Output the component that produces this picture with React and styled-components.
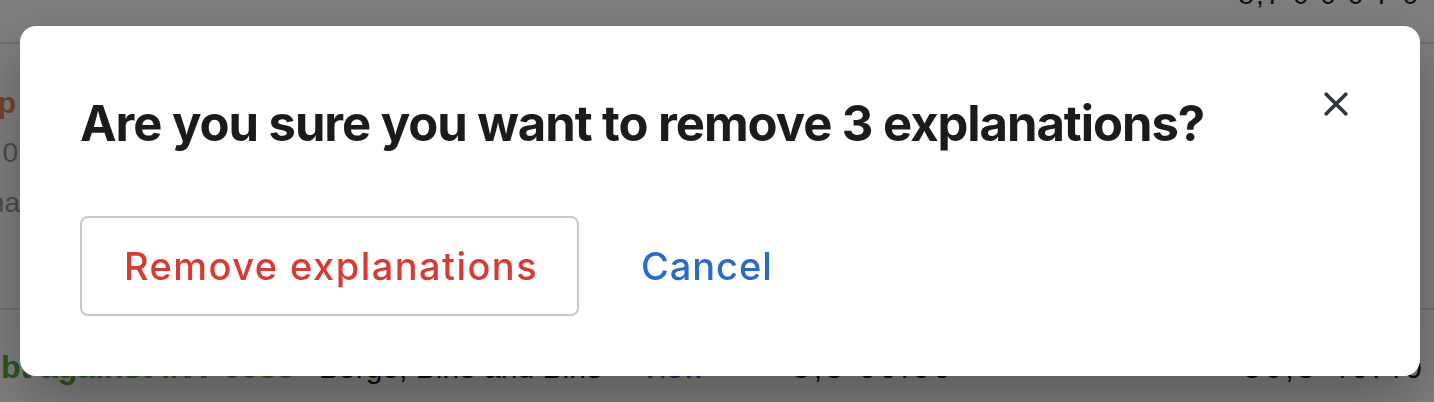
import React from 'react';
import styled, { createGlobalStyle } from 'styled-components';

const GlobalStyle = createGlobalStyle`
  html, body {
    margin: 0;
    padding: 0;
    overflow: hidden;
  }
  body {
    font-family: 'Liberation Sans', Arial, sans-serif;
    background: #ffffff;
  }
`;

// page sitting behind the dialog
const Page = styled.div`
  width: 1434px;
  height: 402px;
  display: flex;
  flex-direction: column;
  overflow: hidden;
  background: #ffffff;
`;

const Row = styled.div`
  display: flex;
  align-items: flex-start;
  height: ${(p) => p.height}px;
  border-bottom: ${(p) => (p.divider ? '2px solid #e3e3e3' : 'none')};
  box-sizing: border-box;
`;

const TopAmount = styled.span`
  margin: -19px 14px 0 auto;
  font-size: 28px;
  line-height: 28px;
  color: #222;
  letter-spacing: 2px;
`;

const LeftCol = styled.div`
  width: 16px;
  display: flex;
  flex-direction: column;
  align-items: flex-end;
  gap: 20px;
  padding-top: 44px;
`;

const Ref = styled.span`
  font-size: 30px;
  line-height: 30px;
  font-weight: 700;
  color: #e0895a;
  white-space: nowrap;
`;

const Meta = styled.span`
  font-size: 28px;
  line-height: 30px;
  color: #9a9a9a;
  white-space: nowrap;
  margin-right: ${(p) => p.shift || 0}px;
`;

const Cell = styled.span`
  font-size: ${(p) => p.size || 30}px;
  font-weight: ${(p) => p.weight || 400};
  color: ${(p) => p.color || '#111'};
  letter-spacing: ${(p) => p.spacing || 0}px;
  line-height: 30px;
  white-space: nowrap;
  width: ${(p) => (p.width ? `${p.width}px` : 'auto')};
  margin-left: ${(p) => p.offset || 0}px;
`;

const BottomRow = styled.div`
  display: flex;
  align-items: baseline;
  padding-top: 42px;
`;

// dialog
const Overlay = styled.div`
  position: fixed;
  inset: 0;
  background: rgba(0, 0, 0, 0.5);
  display: flex;
  align-items: flex-start;
  padding: 26px 0 0 20px;
`;

const Dialog = styled.div`
  width: 1400px;
  box-sizing: border-box;
  padding: 60px;
  background: #ffffff;
  border-radius: 16px;
  box-shadow: 0 22px 60px rgba(0, 0, 0, 0.3);
  display: flex;
  flex-direction: column;
  gap: 54px;
`;

const Header = styled.div`
  display: flex;
  justify-content: space-between;
  align-items: flex-start;
`;

const Title = styled.h2`
  margin: 0;
  font-family: Inter, 'Noto Sans', sans-serif;
  font-weight: 700;
  font-size: 49px;
  line-height: 76px;
  letter-spacing: -1.05px;
  color: #1b1b1d;
`;

const CloseButton = styled.button`
  width: 48px;
  height: 48px;
  margin-top: -6px;
  padding: 0;
  border: none;
  background: transparent;
  display: flex;
  align-items: center;
  justify-content: center;
  cursor: pointer;
`;

const Actions = styled.div`
  display: flex;
  align-items: center;
  gap: 62px;
`;

const ActionButton = styled.button`
  height: 100px;
  box-sizing: border-box;
  padding: ${(p) => (p.outlined ? '0 39px 0 42px' : '0')};
  border: ${(p) => (p.outlined ? '2px solid #c4c8cc' : 'none')};
  border-radius: 8px;
  background: #ffffff;
  font-family: Inter, 'Noto Sans', sans-serif;
  font-weight: 500;
  font-size: 38px;
  letter-spacing: ${(p) => (p.outlined ? 1.45 : 0.9)}px;
  color: ${(p) => p.color};
  cursor: pointer;
`;

const CloseIcon = () => (
  <svg width="24" height="24" viewBox="0 0 24 24" fill="none">
    <path
      d="M2.2 2.2 L21.8 21.8 M21.8 2.2 L2.2 21.8"
      stroke="#2b3841"
      strokeWidth="3.6"
      strokeLinecap="round"
    />
  </svg>
);

const App = () => {
  return (
    <>
      <GlobalStyle />
      <Page>
        <Row height={44} divider>
          <TopAmount>8,7 0 0 0 7 0</TopAmount>
        </Row>
        <Row height={266} divider>
          <LeftCol>
            <Ref>Rep</Ref>
            <Meta shift={-2}>1.0</Meta>
            <Meta shift={-4}>Jona</Meta>
          </LeftCol>
        </Row>
        <BottomRow>
          <Cell size={32} weight={700} color="#5aa83a" offset={-40} width={359}>
            Debt against INV-0056
          </Cell>
          <Cell width={321}>Borge, Bine and Bine</Cell>
          <Cell color="#2a5fb8" width={153}>View</Cell>
          <Cell spacing={4} width={451}>5,5 00.00</Cell>
          <Cell spacing={4}>56,5 40.40</Cell>
        </BottomRow>
      </Page>

      <Overlay>
        <Dialog role="dialog">
          <Header>
            <Title>Are you sure you want to remove 3 explanations?</Title>
            <CloseButton aria-label="Close">
              <CloseIcon />
            </CloseButton>
          </Header>
          <Actions>
            <ActionButton outlined color="#d83b33">
              Remove explanations
            </ActionButton>
            <ActionButton color="#2c6bc4">Cancel</ActionButton>
          </Actions>
        </Dialog>
      </Overlay>
    </>
  );
};

export default App;
